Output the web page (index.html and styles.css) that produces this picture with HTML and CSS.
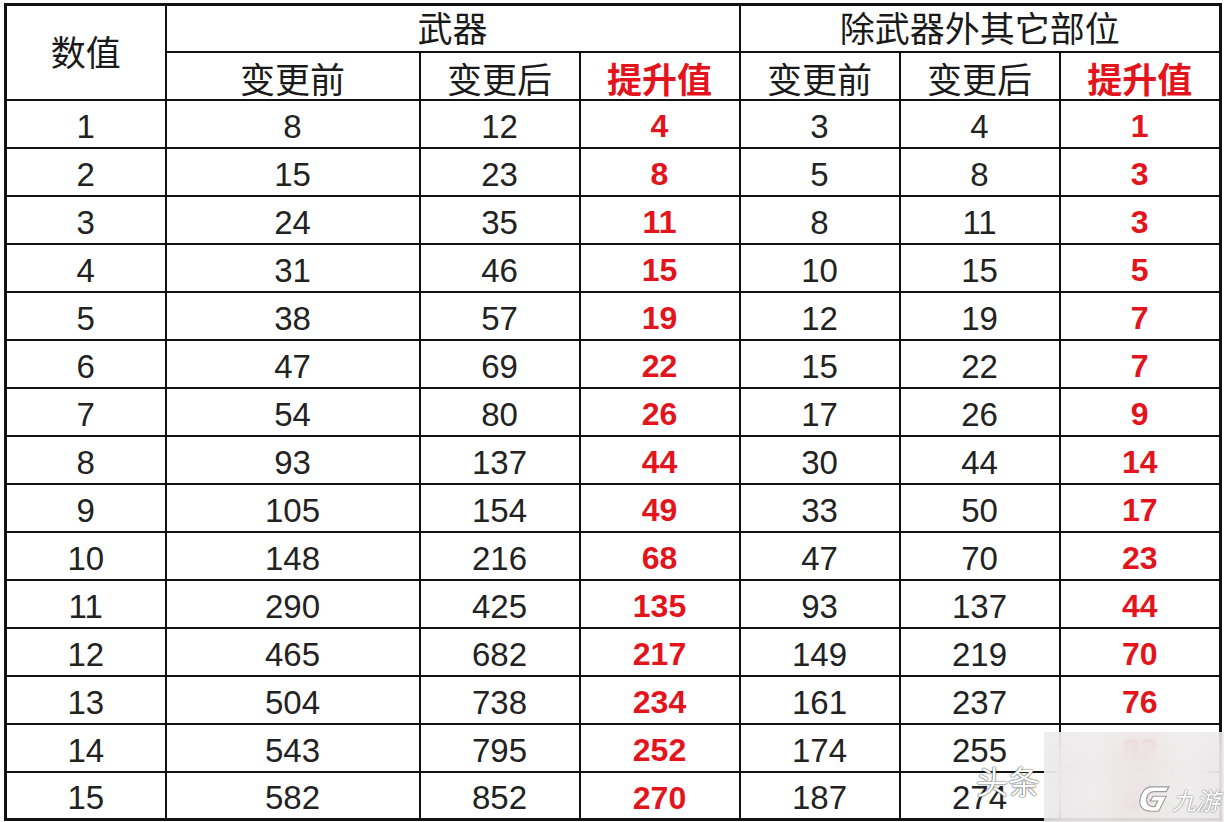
FILE: index.html
```html
<!DOCTYPE html>
<html lang="zh">
<head>
<meta charset="utf-8">
<title>数值对照表</title>
<link rel="stylesheet" href="styles.css">
</head>
<body>
<div class="page">
  <table class="sheet">
    <colgroup>
      <col class="c-idx">
      <col class="c-wide">
      <col class="c-n">
      <col class="c-n">
      <col class="c-n">
      <col class="c-n">
      <col class="c-last">
    </colgroup>
    <thead>
      <tr class="h1">
        <th rowspan="2" class="hd">数值</th>
        <th colspan="3" class="hd">武器</th>
        <th colspan="3" class="hd">除武器外其它部位</th>
      </tr>
      <tr class="h2">
        <th class="hd">变更前</th>
        <th class="hd">变更后</th>
        <th class="hd up">提升值</th>
        <th class="hd">变更前</th>
        <th class="hd">变更后</th>
        <th class="hd up">提升值</th>
      </tr>
    </thead>
    <tbody>
      <tr><td>1</td><td>8</td><td>12</td><td class="r">4</td><td>3</td><td>4</td><td class="r">1</td></tr>
      <tr><td>2</td><td>15</td><td>23</td><td class="r">8</td><td>5</td><td>8</td><td class="r">3</td></tr>
      <tr><td>3</td><td>24</td><td>35</td><td class="r">11</td><td>8</td><td>11</td><td class="r">3</td></tr>
      <tr><td>4</td><td>31</td><td>46</td><td class="r">15</td><td>10</td><td>15</td><td class="r">5</td></tr>
      <tr><td>5</td><td>38</td><td>57</td><td class="r">19</td><td>12</td><td>19</td><td class="r">7</td></tr>
      <tr><td>6</td><td>47</td><td>69</td><td class="r">22</td><td>15</td><td>22</td><td class="r">7</td></tr>
      <tr><td>7</td><td>54</td><td>80</td><td class="r">26</td><td>17</td><td>26</td><td class="r">9</td></tr>
      <tr><td>8</td><td>93</td><td>137</td><td class="r">44</td><td>30</td><td>44</td><td class="r">14</td></tr>
      <tr><td>9</td><td>105</td><td>154</td><td class="r">49</td><td>33</td><td>50</td><td class="r">17</td></tr>
      <tr><td>10</td><td>148</td><td>216</td><td class="r">68</td><td>47</td><td>70</td><td class="r">23</td></tr>
      <tr><td>11</td><td>290</td><td>425</td><td class="r">135</td><td>93</td><td>137</td><td class="r">44</td></tr>
      <tr><td>12</td><td>465</td><td>682</td><td class="r">217</td><td>149</td><td>219</td><td class="r">70</td></tr>
      <tr><td>13</td><td>504</td><td>738</td><td class="r">234</td><td>161</td><td>237</td><td class="r">76</td></tr>
      <tr><td>14</td><td>543</td><td>795</td><td class="r">252</td><td>174</td><td>255</td><td class="r">82</td></tr>
      <tr><td>15</td><td>582</td><td>852</td><td class="r">270</td><td>187</td><td>274</td><td class="r">87</td></tr>
    </tbody>
  </table>
  <div class="wm-text">头条</div>
  <div class="wm-box">
    <div class="wm-logo">
      <svg class="wm-icon" width="34" height="30" viewBox="0 0 36 32">
        <path d="M15 2 L34 2 L31 7 L18 7 C13 7 10 11 10 16 C10 20 13 23 16 23 L19 23 L22 17 L14 17 L17 12 L31 12 L23 28 L14 28 C6 28 2 22 3 16 C4 8 9 2 15 2 Z" fill="#fff" stroke="#9a9a9a" stroke-width="1.2"/>
      </svg>
      <span class="wm-name">九游</span>
    </div>
  </div>
</div>
</body>
</html>
```
FILE: styles.css
```css
html, body {
  margin: 0;
  padding: 0;
  background: #ffffff;
}

.page {
  position: relative;
  width: 1224px;
  height: 822px;
  overflow: hidden;
  padding: 3px 0 0 4px;
  box-sizing: border-box;
}

.sheet {
  border-collapse: collapse;
  table-layout: fixed;
  width: 1216px;
  border: 3px solid #111;
  font-family: "Liberation Sans", Arial, "Noto Sans CJK SC", sans-serif;
  color: #1a1a1a;
}

.c-idx { width: 160px; }
.c-wide { width: 254px; }
.c-n { width: 160px; }
.c-last { width: 161px; }

.sheet th,
.sheet td {
  border: 2px solid #111;
  padding: 0;
  text-align: center;
  vertical-align: middle;
}

.h1 { height: 47px; }
.h2 { height: 48px; }

.hd {
  font-family: "Noto Sans CJK SC", "Noto Sans", sans-serif;
  font-weight: 400;
  font-size: 35px;
  line-height: 1;
  color: #1a1a1a;
}

.h1 .hd { padding-bottom: 4px; }
.h2 .hd { padding-top: 4px; }

.hd.up {
  color: #e3141c;
  font-weight: 700;
}

.sheet tbody tr { height: 48px; }

.sheet td {
  font-size: 33px;
  line-height: 1;
  padding-top: 5px;
  color: #222;
}

.sheet td.r {
  color: #e3141c;
  font-weight: 700;
  font-size: 32px;
}

.wm-text {
  position: absolute;
  left: 976px;
  top: 764px;
  font-family: "Noto Sans CJK SC", sans-serif;
  font-size: 32px;
  line-height: 1;
  color: #ffffff;
  text-shadow: 0 0 1px #333, 0 0 2px #555;
}

.wm-box {
  position: absolute;
  left: 1044px;
  top: 732px;
  width: 180px;
  height: 90px;
  background: rgba(236, 234, 234, 0.84);
  backdrop-filter: blur(14px);
  -webkit-backdrop-filter: blur(14px);
  display: flex;
  align-items: flex-end;
  justify-content: flex-end;
  padding: 0 4px 7px 0;
  box-sizing: border-box;
}

.wm-logo {
  display: flex;
  align-items: center;
  gap: 1px;
}

.wm-name {
  font-family: "Noto Sans CJK SC", sans-serif;
  font-size: 24px;
  font-style: italic;
  line-height: 1;
  color: #ffffff;
  text-shadow: 0 0 1px #777, 0 0 2px #888;
}
```
